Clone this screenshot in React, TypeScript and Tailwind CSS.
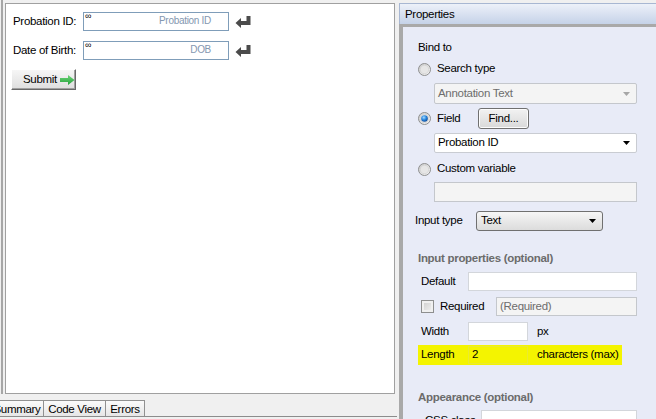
import React from "react";

function Radio({ checked = false }: { checked?: boolean }) {
  return (
    <svg width="13" height="13" viewBox="0 0 13 13" className="shrink-0">
      <defs>
        <linearGradient id="rbg" x1="0" y1="0" x2="1" y2="1">
          <stop offset="0" stopColor="#c9c9c9" />
          <stop offset="1" stopColor="#f7f7f7" />
        </linearGradient>
        <radialGradient id="rdot" cx="0.4" cy="0.35" r="0.7">
          <stop offset="0" stopColor="#a8dcff" />
          <stop offset="0.5" stopColor="#2a88df" />
          <stop offset="1" stopColor="#0b4593" />
        </radialGradient>
      </defs>
      <circle cx="6.5" cy="6.5" r="6" fill="url(#rbg)" stroke="#8e8f8f" strokeWidth="1" />
      <circle cx="6.5" cy="6.5" r="4.2" fill="#e6e6e6" stroke="#cfcfcf" strokeWidth="0.6" />
      {checked && <circle cx="6.5" cy="6.5" r="3.3" fill="url(#rdot)" />}
    </svg>
  );
}

function Arrow({ color }: { color: string }) {
  return (
    <svg width="7" height="4" viewBox="0 0 7 4" className="shrink-0">
      <path d="M0 0 H7 L3.5 4 Z" fill={color} />
    </svg>
  );
}

function Select({ value, disabled = false, className }: { value: string; disabled?: boolean; className: string }) {
  return (
    <div
      className={
        "shrink-0 flex items-center justify-between pl-[3px] pr-[6px] rounded-[2px] border " +
        (disabled ? "bg-[#f4f4f4] border-[#c4c7cc] text-[#6d6d6d] " : "bg-white border-[#c9ccd2] text-black ") +
        className
      }
    >
      <span>{value}</span>
      <Arrow color={disabled ? "#a6a6a6" : "#000"} />
    </div>
  );
}

function Box({ value = "", disabled = false, className }: { value?: string; disabled?: boolean; className: string }) {
  return (
    <div
      className={
        "shrink-0 flex items-center pl-[3px] border " +
        (disabled ? "bg-[#f4f4f4] border-[#c4c7cc] text-[#6d6d6d] " : "bg-white border-[#d3d6db] text-black ") +
        className
      }
    >
      {value}
    </div>
  );
}

function ReturnIcon() {
  return (
    <svg width="16" height="12" viewBox="0 0 16 12" className="shrink-0">
      <path d="M11.5 0 H15.5 V9 H6 V12 L0.5 7 L6 2 V5 H11.5 Z" fill="#4b4b4b" />
    </svg>
  );
}

function FormInput({ hint }: { hint: string }) {
  return (
    <div className="relative w-[146px] h-[19px] border border-[#7f9db9] bg-white">
      <span className="absolute left-[1px] -top-[3px] text-[9px] text-black">∞</span>
      <div className="pr-[17px] pt-[2px] text-right text-[10px] leading-[12px] text-[#8497b0]">{hint}</div>
    </div>
  );
}

const TABS = [
  { label: "Summary", w: "w-[54px]" },
  { label: "Code View", w: "w-[63px]" },
  { label: "Errors", w: "w-[40px]" },
];

export default function App() {
  return (
    <div className="w-[656px] h-[419px] overflow-hidden flex bg-[#f0f0f0] text-[11.5px] tracking-[-0.3px] text-black font-['Liberation_Sans',Arial,sans-serif]">
      {/* designer side */}
      <div className="w-[398px] shrink-0 flex flex-col">
        <div className="shrink-0 ml-px h-[394px] border-l-2 border-[#a6a6a6] pl-[2px] pt-[3px]">
          <div className="w-[390px] h-[391px] border border-[#a0a0a0] bg-white pl-[7px] pt-[8px]">
            <div className="flex items-center h-[19px]">
              <span className="w-[70px]">Probation ID:</span>
              <FormInput hint="Probation ID" />
              <span className="ml-[6px]">
                <ReturnIcon />
              </span>
            </div>
            <div className="flex items-center h-[19px] mt-[10px]">
              <span className="w-[70px]">Date of Birth:</span>
              <FormInput hint="DOB" />
              <span className="ml-[6px]">
                <ReturnIcon />
              </span>
            </div>
            <div className="-ml-[2px] mt-[9px] w-[65px] h-[21px] flex items-center pl-[11px] gap-[3px] border border-t-white border-l-white border-r-[#696969] border-b-[#696969] bg-linear-to-b from-[#f6f6f6] to-[#dedede] shadow-[inset_-1px_-1px_0_#a0a0a0]">
              <span>Submit</span>
              <svg width="15" height="10" viewBox="0 0 15 10">
                <defs>
                  <linearGradient id="gar" x1="0" y1="0" x2="0" y2="1">
                    <stop offset="0" stopColor="#6fd67a" />
                    <stop offset="1" stopColor="#23a03a" />
                  </linearGradient>
                </defs>
                <path d="M0 3 H8 V0 L14.5 5 L8 10 V7 H0 Z" fill="url(#gar)" />
              </svg>
            </div>
          </div>
        </div>
        <div className="shrink-0 mt-[6px] -ml-[10px] w-[407px] flex items-end border-b border-[#8c8c8c]">
          {TABS.map((t, i) => (
            <div
              key={t.label}
              className={
                "shrink-0 h-[16px] flex items-center justify-center overflow-hidden whitespace-nowrap leading-[14px] border border-b-0 border-[#919191] bg-linear-to-b from-[#fbfbfb] to-[#e6e6e6] " +
                (i === 0 ? "" : "-ml-px ") +
                t.w
              }
            >
              {t.label}
            </div>
          ))}
        </div>
      </div>

      {/* properties side */}
      <div className="flex-1 flex flex-col pl-px pt-[3px]">
        <div className="shrink-0 h-[21px] flex items-center pl-[5px] pt-[2px] border-t border-l border-[#a8b7d2] bg-linear-to-b from-[#edf1f9] to-[#c5d2e8]">
          Properties
        </div>
        <div className="shrink-0 h-[3px] bg-[#a9a9a9]" />
        <div className="flex-1 border-l-4 border-[#a9a9a9] bg-[#e8ebf7] pl-[15px] flex flex-col">
          <div className="shrink-0 mt-[13px] h-[14px] leading-[14px]">Bind to</div>

          <div className="shrink-0 mt-[8px] h-[14px] flex items-center gap-[6px]">
            <Radio />
            <span>Search type</span>
          </div>
          <Select value="Annotation Text" disabled className="mt-[7px] ml-[16px] w-[203px] h-[21px]" />

          <div className="shrink-0 mt-[4px] h-[21px] flex items-center gap-[6px]">
            <Radio checked />
            <span className="w-[35px]">Field</span>
            <div className="w-[51px] h-[21px] flex items-center justify-center rounded-[3px] border border-[#707070] bg-linear-to-b from-[#f2f2f2] to-[#d9d9d9] shadow-[inset_0_0_0_1px_#fcfcfc]">
              Find...
            </div>
          </div>
          <Select value="Probation ID" className="mt-[4px] ml-[16px] w-[203px] h-[20px]" />

          <div className="shrink-0 mt-[9px] h-[14px] flex items-center gap-[6px]">
            <Radio />
            <span>Custom variable</span>
          </div>
          <Box disabled className="mt-[6px] ml-[16px] w-[203px] h-[20px]" />

          <div className="shrink-0 mt-[9px] h-[20px] flex items-center -ml-[3px]">
            <span className="w-[61px]">Input type</span>
            <div className="w-[127px] h-[20px] flex items-center justify-between pl-[4px] pr-[6px] rounded-[3px] border border-[#707070] bg-linear-to-b from-[#f6f6f6] to-[#dcdcdc]">
              <span>Text</span>
              <Arrow color="#000" />
            </div>
          </div>

          <div className="shrink-0 mt-[20px] h-[14px] leading-[14px] font-bold text-[#6b6b6b]">Input properties (optional)</div>

          <div className="shrink-0 mt-[7px] h-[19px] flex items-center ml-[3px]">
            <span className="w-[47px]">Default</span>
            <Box className="w-[169px] h-[19px]" />
          </div>

          <div className="shrink-0 mt-[6px] h-[19px] flex items-center ml-[3px]">
            <span className="w-[13px] h-[13px] border border-[#8e8f8f] bg-linear-to-br from-[#cbcbcb] to-[#f4f4f4] shadow-[inset_0_0_0_2px_#f0f0f0]" />
            <span className="ml-[6px] w-[56px]">Required</span>
            <Box value="(Required)" disabled className="w-[141px] h-[19px]" />
          </div>

          <div className="shrink-0 mt-[6px] h-[19px] flex items-center ml-[3px]">
            <span className="w-[47px]">Width</span>
            <Box className="w-[60px] h-[19px]" />
            <span className="ml-[9px]">px</span>
          </div>

          <div className="shrink-0 mt-[4px] w-[204px] h-[20px] flex items-center pl-[3px] bg-[#f4f400]">
            <span className="w-[47px]">Length</span>
            <div className="w-[60px] h-[18px] flex items-center pl-[3px] border border-[#eaea30]">2</div>
            <span className="ml-[9px]">characters (max)</span>
          </div>

          <div className="shrink-0 mt-[25px] h-[14px] leading-[14px] font-bold text-[#6b6b6b]">Appearance (optional)</div>

          <div className="shrink-0 mt-[6px] h-[19px] flex items-start ml-[7px]">
            <span className="w-[56px] pt-[3px] leading-[14px]">CSS class</span>
            <Box className="w-[156px] h-[19px]" />
          </div>
        </div>
      </div>
    </div>
  );
}
